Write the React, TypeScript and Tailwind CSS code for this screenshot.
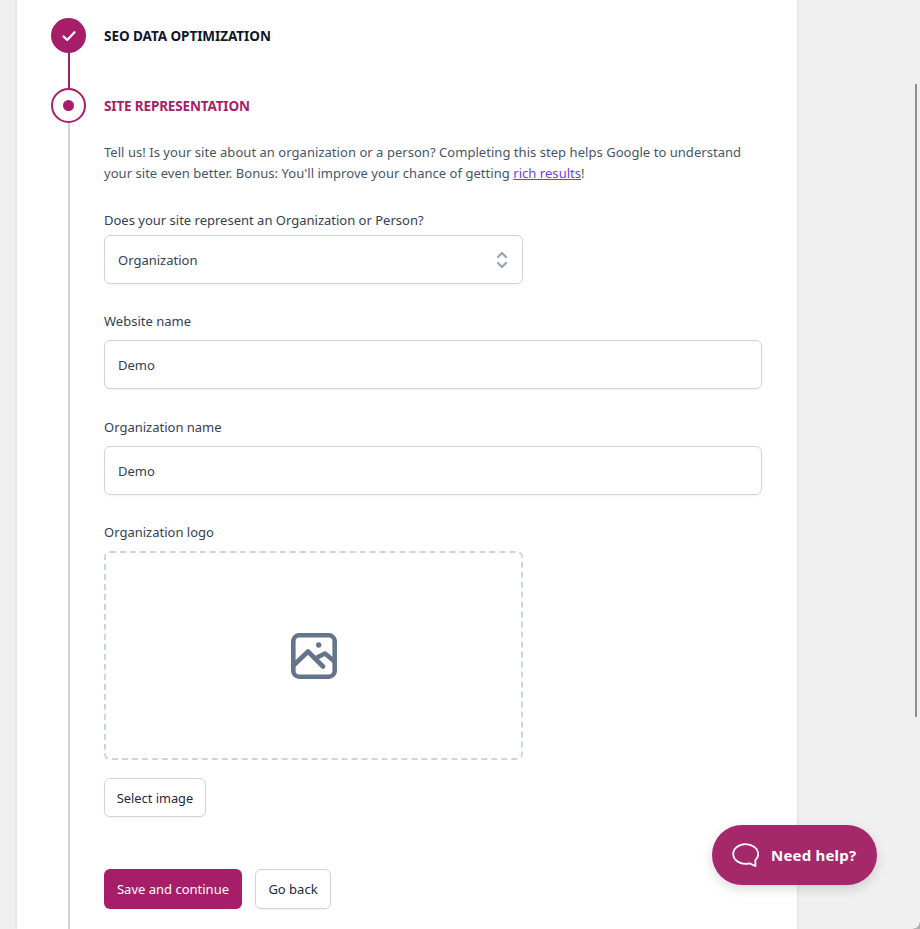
import React from 'react';

const Label: React.FC<{ children: React.ReactNode }> = ({ children }) => (
  <label className="block pt-[1px] text-[13px] leading-[21px] text-[#334155]">{children}</label>
);

const TextField: React.FC<{ value: string }> = ({ value }) => (
  <div className="mt-[8px] flex h-[49px] items-center rounded-md border border-[#cbd5e1] bg-white px-[13px] pt-[2px] text-[13px] text-[#334155] shadow-[0_1px_2px_rgba(0,0,0,0.05)]">
    {value}
  </div>
);

const App: React.FC = () => {
  return (
    <div className="relative h-[929px] w-[920px] overflow-hidden bg-[#f0f0f1] font-['Noto_Sans','Open_Sans',sans-serif]">
      {/* Card */}
      <div className="ml-[17px] flex h-full w-[780px] flex-col bg-white pl-[34px] pr-[35px] pt-[18px] shadow-[0_0_3px_rgba(0,0,0,0.12)]">
        {/* Done step */}
        <div className="flex h-[70px] gap-[18px]">
          <div className="flex w-[35px] flex-col items-center">
            <div className="flex h-[35px] w-[35px] items-center justify-center rounded-full bg-[#a61e69]">
              <svg width="16" height="16" viewBox="0 0 16 16" fill="none" stroke="white" strokeWidth="2.2" strokeLinecap="round" strokeLinejoin="round">
                <path d="M2.5 8.5 6.2 12 13.5 4.2" />
              </svg>
            </div>
            <div className="w-[2px] flex-1 bg-[#a61e69]" />
          </div>
          <div className="flex h-[35px] items-center pt-[1px] text-[13.5px] font-bold tracking-[-0.05px] text-[#0f172a]">
            SEO DATA OPTIMIZATION
          </div>
        </div>

        {/* Current step */}
        <div className="flex flex-1 gap-[18px]">
          <div className="flex w-[35px] flex-col items-center">
            <div className="flex h-[35px] w-[35px] items-center justify-center rounded-full border-2 border-[#a61e69] bg-white">
              <div className="h-[11px] w-[11px] rounded-full bg-[#a61e69]" />
            </div>
            <div className="w-[2px] flex-1 bg-[#cbd5e1]" />
          </div>
          <div className="flex-1">
            <div className="flex h-[35px] items-center pt-[1px] text-[13.5px] font-bold tracking-[-0.15px] text-[#a61e69]">
              SITE REPRESENTATION
            </div>
            <p className="mt-[19px] text-[13px] leading-[21px] tracking-[0.04px] text-[#475569]">
              Tell us! Is your site about an organization or a person? Completing this step helps Google to understand
              <br />
              your site even better. Bonus: You'll improve your chance of getting{' '}
              <a className="text-[#6d3ff0] underline">rich results</a>!
            </p>

            <div className="mt-[25px]">
              <Label>Does your site represent an Organization or Person?</Label>
              <div className="mt-[4px] flex h-[49px] w-[419px] items-center justify-between rounded-md border border-[#cbd5e1] bg-white pl-[13px] pr-[14px] text-[13px] text-[#334155] shadow-[0_1px_2px_rgba(0,0,0,0.05)]">
                <span className="pt-[2px]">Organization</span>
                <svg width="12" height="20" viewBox="0 0 12 20" fill="none" stroke="#94a3b8" strokeWidth="2.2" strokeLinecap="round" strokeLinejoin="round">
                  <path d="M2 7 6 3l4 4M2 13l4 4 4-4" />
                </svg>
              </div>
            </div>

            <div className="mt-[26px]">
              <Label>Website name</Label>
              <TextField value="Demo" />
            </div>

            <div className="mt-[27px]">
              <Label>Organization name</Label>
              <TextField value="Demo" />
            </div>

            <div className="mt-[26px]">
              <Label>Organization logo</Label>
              <div className="mt-[8px] flex h-[209px] w-[419px] items-center justify-center rounded-md border-2 border-dashed border-[#cbd5e1] bg-white">
                <svg width="46" height="46" viewBox="0 0 46 46" fill="none" stroke="#64748b" strokeWidth="4.6" strokeLinecap="round" strokeLinejoin="round">
                  <rect x="2.3" y="2.3" width="41.4" height="41.4" rx="6" />
                  <path d="M3 32 17 18.5 32 33.5M24 25.5 34 20.5 43.5 28.5" />
                  <circle cx="27.7" cy="12" r="2.7" fill="#64748b" stroke="none" />
                </svg>
              </div>
            </div>

            <button className="mt-[18px] flex h-[39px] w-[102px] items-center justify-center rounded-md border border-[#cbd5e1] bg-white pt-[2px] text-[12.8px] text-[#1e293b] shadow-[0_1px_2px_rgba(0,0,0,0.05)]">
              Select image
            </button>

            <div className="mt-[52px] flex gap-[13px]">
              <button className="flex h-[40px] w-[138px] items-center justify-center rounded-md bg-[#a61e69] pt-[1px] text-[13px] text-white">
                Save and continue
              </button>
              <button className="flex h-[40px] w-[76px] items-center justify-center rounded-md border border-[#cbd5e1] bg-white pt-[1px] text-[13px] text-[#1e293b] shadow-[0_1px_2px_rgba(0,0,0,0.05)]">
                Go back
              </button>
            </div>
          </div>
        </div>
      </div>

      {/* Scrollbar thumb */}
      <div className="absolute left-[915px] top-[84px] h-[633px] w-[2px] bg-[#8f8f8f]" />

      {/* Window corner */}
      <div className="absolute bottom-0 right-0 h-[7px] w-[7px] bg-[radial-gradient(circle_at_0_0,transparent_6px,#b0b0b0_7px)]" />

      {/* Help widget */}
      <button className="absolute left-[712px] top-[825px] flex h-[60px] w-[165px] items-center rounded-full bg-[#a4286a] pl-[20px] text-[15px] font-bold tracking-[0.2px] text-white shadow-[0_4px_12px_rgba(0,0,0,0.14)]">
        <svg width="27" height="24" viewBox="0 0 27 24" fill="none" stroke="white" strokeWidth="1.8" strokeLinejoin="round" className="mr-[12px]">
          <path d="M13.5 1.2C6.8 1.2 1.2 5.5 1.2 11s5.6 9.8 12.3 9.8c1.4 0 2.8-.2 4-.5l6 2.8-.2-5.8c2-1.8 2.9-4 2.9-6.3C26.2 5.5 20.2 1.2 13.5 1.2Z" />
        </svg>
        Need help?
      </button>
    </div>
  );
};

export default App;
